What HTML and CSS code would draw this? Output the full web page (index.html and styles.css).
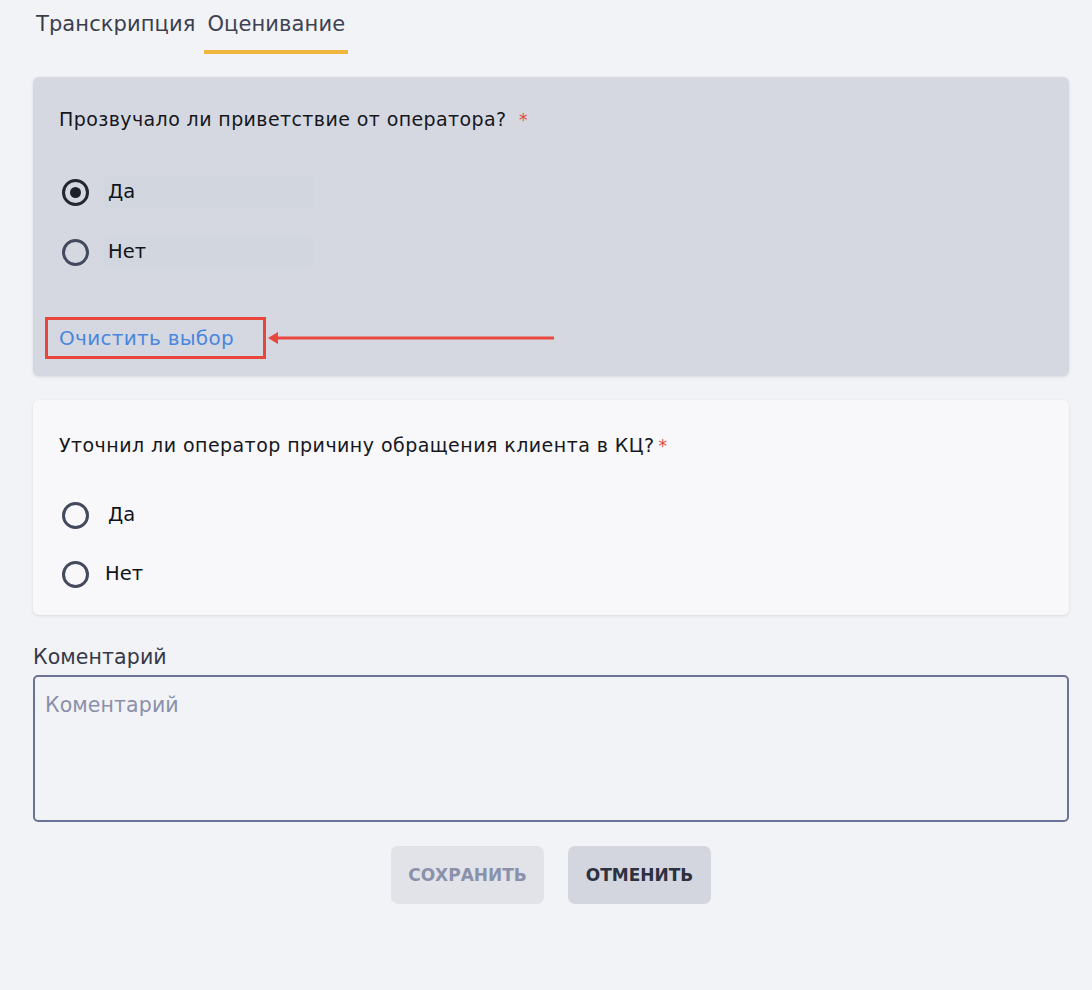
FILE: index.html
```html
<!DOCTYPE html>
<html lang="ru">
<head>
<meta charset="utf-8">
<link rel="stylesheet" href="styles.css">
</head>
<body>
<div class="page">
  <nav class="tabs">
    <span class="tab">Транскрипция</span>
    <span class="tab active">Оценивание</span>
  </nav>

  <section class="card card-active">
    <div class="question">Прозвучало ли приветствие от оператора? <span class="req">*</span></div>
    <div class="options">
      <label class="option"><span class="radio checked"></span><span class="opt-label shaded">Да</span></label>
      <label class="option"><span class="radio"></span><span class="opt-label shaded">Нет</span></label>
    </div>
    <div class="clear-row">
      <span class="clear-box"><a class="clear-link">Очистить выбор</a></span>
      <svg class="arrow" width="290" height="16" viewBox="0 0 290 16">
        <line x1="10" y1="8" x2="288" y2="8" stroke="#e9483f" stroke-width="3"/>
        <path d="M2 8 L12 2 L12 14 Z" fill="#e9483f"/>
      </svg>
    </div>
  </section>

  <section class="card card-plain">
    <div class="question">Уточнил ли оператор причину обращения клиента в КЦ?<span class="req">*</span></div>
    <div class="options">
      <label class="option"><span class="radio"></span><span class="opt-label">Да</span></label>
      <label class="option"><span class="radio"></span><span class="opt-label tight">Нет</span></label>
    </div>
  </section>

  <div class="field">
    <div class="field-label">Коментарий</div>
    <div class="textarea">Коментарий</div>
  </div>

  <div class="actions">
    <button class="btn btn-save">СОХРАНИТЬ</button>
    <button class="btn btn-cancel">ОТМЕНИТЬ</button>
  </div>
</div>
</body>
</html>
```

FILE: styles.css
```css
* { box-sizing: border-box; }
html, body { margin: 0; padding: 0; }
body {
  background: #f2f3f6;
  font-family: "DejaVu Sans", "Noto Sans", sans-serif;
  color: #15171d;
}
.page {
  padding: 0 23px 0 33px;
}
.tabs {
  display: flex;
  gap: 6px;
  padding-top: 11px;
  height: 54px;
}
.tab {
  font-size: 21px;
  color: #3a3e4c;
  padding: 0 3px 8px 3px;
  line-height: 26px;
  letter-spacing: 0.1px;
}
.tab.active {
  border-bottom: 4px solid #f0b53c;
  color: #3e4253;
}
.card {
  margin-top: 23px;
  border-radius: 6px;
  box-shadow: 0 1px 3px rgba(40, 50, 80, 0.13);
  padding: 30px 26px 0 26px;
}
.card-active {
  background: #d5d8e1;
  height: 299px;
}
.card-plain {
  background: #f8f8fa;
  height: 215px;
  margin-top: 24px;
  padding-top: 33px;
}
.question {
  font-size: 19px;
  line-height: 24px;
  letter-spacing: 0.4px;
}
.card-plain .question { letter-spacing: 0.45px; }
.req { color: #e5473d; margin-left: 6px; font-size: 17px; }
.card-plain .req { margin-left: 4px; }
.options {
  margin-top: 44px;
  display: flex;
  flex-direction: column;
  gap: 28px;
}
.card-plain .options { margin-top: 41px; gap: 27px; }
.option {
  display: flex;
  align-items: center;
  height: 32px;
}
.radio {
  width: 27px;
  height: 27px;
  border: 3px solid #444a5e;
  border-radius: 50%;
  margin-left: 3px;
  margin-right: 19px;
  display: flex;
  align-items: center;
  justify-content: center;
  flex: none;
}
.radio.checked { border-color: #24272f; }
.radio.checked::after {
  content: "";
  width: 11px;
  height: 11px;
  border-radius: 50%;
  background: #1d2028;
}
.opt-label {
  font-size: 19.5px;
  line-height: 32px;
  color: #111319;
}
.opt-label.shaded {
  width: 210px;
  padding-left: 4px;
  margin-left: -4px;
  background: rgba(205, 209, 220, 0.25);
  border-radius: 3px;
}
.opt-label.tight { margin-left: -3px; }
.clear-row {
  display: flex;
  align-items: center;
  margin-top: 49px;
  margin-left: -14px;
}
.clear-box {
  border: 3px solid #e8463c;
  width: 221px;
  height: 42px;
  display: flex;
  align-items: center;
  padding-left: 11px;
}
.clear-link {
  color: #4a86df;
  font-size: 20px;
  letter-spacing: 0.3px;
}
.arrow { display: block; }
.field { margin-top: 30px; }
.field-label {
  font-size: 20.5px;
  line-height: 24px;
  color: #353949;
  letter-spacing: 0.1px;
}
.textarea {
  margin-top: 6px;
  height: 147px;
  border: 2px solid #6a7396;
  border-radius: 5px;
  padding: 16px 10px;
  font-size: 20.5px;
  line-height: 24px;
  color: #8a90aa;
  letter-spacing: 0.1px;
}
.actions {
  display: flex;
  justify-content: center;
  gap: 24px;
  margin-top: 24px;
}
.btn {
  border: none;
  border-radius: 7px;
  height: 58px;
  font-family: inherit;
  font-weight: 700;
  font-size: 17px;
}
.btn-save {
  width: 153px;
  background: #e1e3e9;
  color: #8a91ab;
}
.btn-cancel {
  width: 143px;
  background: #d3d5df;
  color: #2d3140;
}
```
